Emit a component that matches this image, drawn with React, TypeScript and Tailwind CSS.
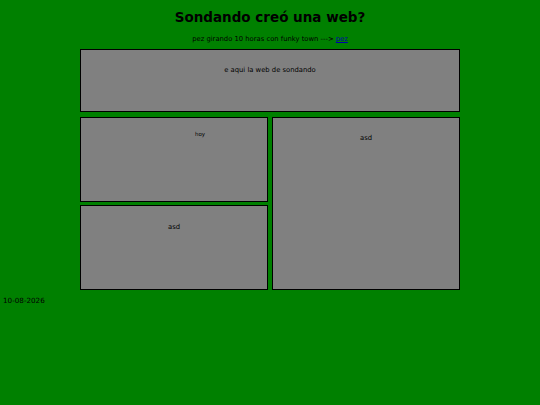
export default function App() {
  return (
    <div className="min-h-[405px] w-full bg-[#008000] text-black" style={{ fontFamily: '"DejaVu Sans", Verdana, sans-serif' }}>
      <div className="flex flex-col items-center">
        <h1 className="mt-[9px] text-[13.5px] font-bold leading-[17px]">Sondando creó una web?</h1>
        <p className="mt-[9px] text-[6.8px] leading-[8px]">
          pez girando 10 horas con funky town ---&gt; <a href="#" className="text-[#0000aa] underline">pez</a>
        </p>
        <div className="mt-[6px] flex w-[380px] flex-col gap-[5px]">
          <div className="h-[63px] border border-black bg-[#808080] pt-[16px] text-center text-[6.8px] leading-[8px]">
            e aqui la web de sondando
          </div>
          <div className="flex gap-[4px]">
            <div className="flex w-[188px] flex-col gap-[3px]">
              <div className="h-[85px] border border-black bg-[#808080] pt-[13px] pl-[114px] text-[5.5px] leading-[6px]">
                hoy
              </div>
              <div className="h-[85px] border border-black bg-[#808080] pt-[17px] text-center text-[6.8px] leading-[8px]">
                asd
              </div>
            </div>
            <div className="h-[173px] w-[188px] border border-black bg-[#808080] pt-[16px] text-center text-[6.8px] leading-[8px]">
              asd
            </div>
          </div>
        </div>
      </div>
      <div className="mt-[7px] pl-[3px] text-[7.2px] leading-[8px]">10-08-2026</div>
    </div>
  );
}
